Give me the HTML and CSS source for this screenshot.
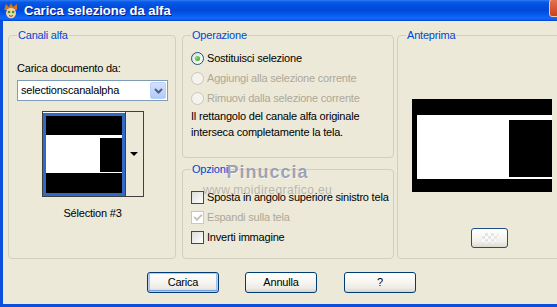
FILE: index.html
```html
<!DOCTYPE html>
<html lang="it">
<head>
    <meta charset="UTF-8">
    <meta name="viewport" content="width=device-width, initial-scale=1.0">
    <title>Carica selezione da alfa</title>
    <link rel="stylesheet" href="styles.css">
</head>
<body>

    <div class="window">

        <!-- TITLE BAR -->
        <div class="titlebar">
            <svg class="appIcon" viewBox="0 0 16 16">
                <path d="M1 7 L3 1 L6 4 L8 0 L10 4 L14 1 L14 7 Z" fill="#d8701c"/>
                <ellipse cx="8" cy="10" rx="5" ry="5.2" fill="#f2d6a2"/>
                <circle cx="6" cy="9" r="1.3" fill="#2a9a3a"/>
                <circle cx="10.2" cy="9" r="1.3" fill="#2a9a3a"/>
                <path d="M6 12.5 Q8 14.2 10 12.5" stroke="#b03020" stroke-width="1" fill="none"/>
            </svg>
            <span class="titleText">Carica selezione da alfa</span>
            <span class="closeBtn"></span>
        </div>

        <div class="frame">

            <div class="groups">

                <!-- CANALI ALFA -->
                <fieldset class="group canali">
                    <legend>Canali alfa</legend>
                    <p class="label">Carica documento da:</p>
                    <div class="combo">
                        <span class="comboText">selectionscanalalpha</span>
                        <span class="comboBtn">
                            <svg viewBox="0 0 9 6" width="9" height="6"><path d="M1 1 L4.5 4.5 L8 1" stroke="#4d6185" stroke-width="2" fill="none"/></svg>
                        </span>
                    </div>
                    <div class="thumb">
                        <div class="thumbImg">
                            <svg viewBox="0 0 76 77" width="76" height="77">
                                <rect width="76" height="77" fill="#000"/>
                                <rect x="0" y="19" width="76" height="38" fill="#fff"/>
                                <rect x="54" y="22" width="22" height="34" fill="#000"/>
                            </svg>
                        </div>
                        <div class="thumbArrow"><span class="triangle"></span></div>
                    </div>
                    <p class="thumbName">Sélection #3</p>
                </fieldset>

                <div class="midCol">

                    <!-- OPERAZIONE -->
                    <fieldset class="group operazione">
                        <legend>Operazione</legend>
                        <div class="row"><span class="radio checked"></span><span>Sostituisci selezione</span></div>
                        <div class="row disabled"><span class="radio"></span><span>Aggiungi alla selezione corrente</span></div>
                        <div class="row disabled"><span class="radio"></span><span>Rimuovi dalla selezione corrente</span></div>
                        <p class="desc">Il rettangolo del canale alfa originale<br>interseca completamente la tela.</p>
                    </fieldset>

                    <!-- OPZIONI -->
                    <fieldset class="group opzioni">
                        <legend>Opzioni</legend>
                        <div class="row"><span class="check"></span><span>Sposta in angolo superiore sinistro tela</span></div>
                        <div class="row disabled"><span class="check checked"></span><span>Espandi sulla tela</span></div>
                        <div class="row"><span class="check"></span><span>Inverti immagine</span></div>

                        <div class="watermark">
                            <span class="wmName">Pinuccia</span>
                            <span class="wmSite">www.moidiregrafico.eu</span>
                        </div>
                    </fieldset>

                </div>

                <!-- ANTEPRIMA -->
                <fieldset class="group anteprima">
                    <legend>Anteprima</legend>
                    <div class="preview">
                        <svg viewBox="0 0 140 93" width="140" height="93">
                            <rect width="140" height="93" fill="#000"/>
                            <rect x="5" y="16" width="135" height="64" fill="#fff"/>
                            <rect x="97" y="21" width="43" height="57" fill="#000"/>
                        </svg>
                    </div>
                    <div class="bgBtn"><span class="checker"></span></div>
                </fieldset>

            </div>

            <!-- BUTTONS -->
            <div class="buttons">
                <button class="btn default">Carica</button>
                <button class="btn">Annulla</button>
                <button class="btn help">?</button>
            </div>

        </div>
    </div>

</body>
</html>
```

FILE: styles.css
```css
*{ padding:0; margin:0; box-sizing:border-box; }

:root{
    --face: #ece9d8;
    --groupLine: #d0d0bf;
    --groupTitle: #0046d5;
    --disabled: #aca899;
    --xpBlue: #0b4fdc;
    --ctrlBorder: #1c5180;
}

body{
    width: 557px;
    height: 307px;
    overflow: hidden;
    background: var(--face);
    font-family: "Liberation Sans", Arial, sans-serif;
    font-size: 11px;
    letter-spacing: -0.2px;
    color: #000;
}

/*   WINDOW   */

.window{
    display: flex;
    flex-direction: column;
    width: 557px;
    height: 307px;
    overflow: hidden;
}

.titlebar{
    display: flex;
    align-items: center;
    height: 21px;
    flex-shrink: 0;
    padding-left: 3px;
    background: linear-gradient(#2f7cf2 0px, #0a5ae8 2px, #0050e0 6px, #0049d8 10px, #0456ea 14px, #1268fa 18px, #0a58ea 20px, #0040c8 21px);
}
.appIcon{ width: 16px; height: 16px; }
.titleText{
    margin-left: 5px;
    color: #fff;
    font-size: 13px;
    font-weight: bold;
    letter-spacing: 0;
    text-shadow: 1px 1px 0 #0a1a8c;
}
.closeBtn{
    align-self: flex-start;
    margin-left: auto;
    margin-right: -14px;
    margin-top: -1px;
    width: 22px;
    height: 18px;
    border: 1px solid #f4c8b8;
    border-radius: 3px;
    background: linear-gradient(#e8704c, #c8401c);
}

.frame{
    flex: 1;
    display: flex;
    flex-direction: column;
    border-left: 3px solid var(--xpBlue);
    border-bottom: 3px solid var(--xpBlue);
    background: var(--face);
    padding: 8px 0 0 5px;
}

/*   GROUPS   */

.groups{
    display: flex;
    height: 230px;
}
.group{
    flex-shrink: 0;
    min-width: 0;
    border: 1px solid var(--groupLine);
    border-radius: 4px;
    padding: 0 8px;
}
.group legend{
    padding: 0 1px;
    line-height: 13px;
    color: var(--groupTitle);
}

.canali{ width: 168px; padding-right: 7px; }
.midCol{
    display: flex;
    flex-direction: column;
    gap: 5px;
    width: 212px;
    margin-left: 6px;
    flex-shrink: 0;
}
.operazione{ height: 129px; padding-top: 6px; }
.opzioni{ height: 96px; padding-top: 11px; position: relative; }
.anteprima{ width: 190px; margin-left: 3px; }

/*   CANALI ALFA   */

.label{ margin-top: 20px; line-height: 13px; }

.combo{
    display: flex;
    height: 21px;
    margin-top: 5px;
    border: 1px solid #7f9db9;
    background: #fff;
    padding: 1px;
}
.comboText{ flex: 1; padding-left: 2px; line-height: 17px; }
.comboBtn{
    display: flex;
    align-items: center;
    justify-content: center;
    width: 16px;
    height: 17px;
    border: 1px solid #bad0fc;
    border-radius: 2px;
    background: linear-gradient(#d4e1fe, #b5c9f7);
}

.thumb{
    display: flex;
    width: 102px;
    height: 86px;
    margin: 10px auto 0;
    border: 1px solid #404040;
    background: #fff;
}
.thumbImg{
    width: 82px;
    height: 83px;
    margin-top: 1px;
    border: 3px solid #316ac5;
    overflow: hidden;
}
.thumbImg svg{ display: block; }
.thumbArrow{
    flex: 1;
    display: flex;
    align-items: center;
    justify-content: center;
    border-left: 1px solid #404040;
    background: var(--face);
}
.triangle{
    width: 0;
    height: 0;
    border-left: 4px solid transparent;
    border-right: 4px solid transparent;
    border-top: 4px solid #000;
}
.thumbName{ margin-top: 10px; text-align: center; line-height: 13px; }

/*   OPERAZIONE / OPZIONI   */

.row{
    display: flex;
    align-items: center;
    gap: 3px;
    height: 20px;
    white-space: nowrap;
}
.row.disabled{ color: var(--disabled); }

.radio{
    flex-shrink: 0;
    width: 13px;
    height: 13px;
    border-radius: 50%;
    border: 1px solid var(--ctrlBorder);
    background: linear-gradient(135deg, #dcdcd7, #fff);
    display: flex;
    align-items: center;
    justify-content: center;
}
.radio.checked::after{
    content: "";
    width: 5px;
    height: 5px;
    border-radius: 50%;
    background: radial-gradient(circle at 35% 35%, #7ce07c, #21a121);
}
.disabled .radio{ border-color: #cac8bb; background: #f4f3ee; }

.desc{ line-height: 16px; }

.check{
    flex-shrink: 0;
    width: 13px;
    height: 13px;
    border: 1px solid var(--ctrlBorder);
    background: linear-gradient(135deg, #dcdcd7, #fff);
    display: flex;
    align-items: center;
    justify-content: center;
}
.disabled .check{ border-color: #cac8bb; background: #fff; }
.check.checked::after{
    content: "";
    width: 6px;
    height: 3px;
    margin-top: -2px;
    border-left: 2px solid #c7c5b2;
    border-bottom: 2px solid #c7c5b2;
    transform: rotate(-45deg);
}

.watermark{
    position: absolute;
    left: 20px;
    top: -14px;
    display: flex;
    flex-direction: column;
    align-items: center;
    pointer-events: none;
}
.wmName{
    font-size: 18px;
    font-weight: bold;
    letter-spacing: 1px;
    line-height: 20px;
    margin-bottom: 2px;
    color: rgba(120, 128, 160, 0.7);
    text-shadow: 1px 1px 0 rgba(255, 255, 255, 0.6);
}
.wmSite{
    font-size: 12px;
    letter-spacing: 0.4px;
    line-height: 12px;
    color: rgba(130, 130, 130, 0.5);
}

/*   ANTEPRIMA   */

.preview{ margin: 57px 0 0 6px; width: 140px; height: 93px; }
.preview svg{ display: block; }

.bgBtn{
    display: flex;
    align-items: center;
    justify-content: center;
    width: 37px;
    height: 20px;
    margin: 36px 0 0 65px;
    border: 1px solid #1f4f8a;
    border-radius: 3px;
    background: linear-gradient(#fff, #f1f0ea 70%, #dedad0);
}
.checker{
    width: 16px;
    height: 10px;
    background: conic-gradient(#e6e6e6 25%, #fafafa 0 50%, #e6e6e6 0 75%, #fafafa 0) 0 0 / 6px 6px;
}

/*   BUTTONS   */

.buttons{
    display: flex;
    gap: 26px;
    margin-top: 13px;
    padding-left: 139px;
}
.btn{
    width: 72px;
    height: 21px;
    border: 1px solid #003c74;
    border-radius: 3px;
    background: linear-gradient(#fff 0%, #f7f6f2 45%, #ecebe4 80%, #d8d3c8 100%);
    font-family: inherit;
    font-size: 11px;
    letter-spacing: -0.2px;
    color: #000;
    line-height: 19px;
}
.btn.default{ box-shadow: inset 0 0 0 1px #b4cdf4, inset 0 -2px 0 0 #7a9ce0, inset 2px 0 0 0 #a6c0ee, inset -2px 0 0 0 #a6c0ee; }
.btn.help{ margin-left: 1px; }
```
